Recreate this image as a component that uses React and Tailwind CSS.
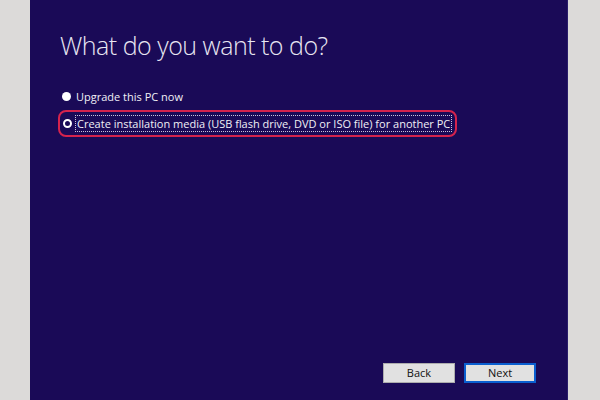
import React, { useState } from "react";

const options = [
  { id: "upgrade", label: "Upgrade this PC now" },
  {
    id: "media",
    label: "Create installation media (USB flash drive, DVD or ISO file) for another PC",
  },
];

const Radio = ({ checked }) => (
  <span
    className={`w-[9px] h-[9px] rounded-full shrink-0 ${
      checked ? "bg-[#1a0a57] border-[2.5px] border-white" : "bg-white"
    }`}
  />
);

export default function App() {
  const [choice, setChoice] = useState("media");

  return (
    <div
      className="w-[600px] h-[400px] flex bg-[#dcdad9] overflow-hidden"
      style={{ fontFamily: '"Open Sans", "Liberation Sans", sans-serif' }}
    >
      {/* Setup panel */}
      <div className="ml-[30px] w-[538px] h-full bg-[#1a0a57] border-r border-[#2a1d6a] flex flex-col pl-[30px] pr-[30px]">
        <h1 className="mt-[27px] text-[25px] font-light text-[#e8e6f2] tracking-[-0.5px] leading-[36px]">
          What do you want to do?
        </h1>

        <div className="mt-[25px] flex flex-col gap-[6px]">
          {options.map((opt) => {
            const active = choice === opt.id;
            return (
              <button
                key={opt.id}
                onClick={() => setChoice(opt.id)}
                className={`flex items-center gap-[4px] text-left self-start ${
                  active
                    ? "-ml-[2px] h-[27px] pl-[3px] pr-[4px] border-2 border-[#d5234d] rounded-[8px]"
                    : "h-[16px] pl-[2px]"
                }`}
              >
                <Radio checked={active} />
                <span
                  className={`text-[11px] text-[#f1f0f6] leading-[15px] px-[1px] ${
                    active ? "outline outline-1 outline-dotted outline-[#c9c6dc]" : ""
                  }`}
                >
                  {opt.label}
                </span>
              </button>
            );
          })}
        </div>

        <div className="mt-auto mb-[17px] flex justify-end gap-[9px] pr-[1px]">
          <button className="w-[72px] h-[20px] bg-[#e1e1e1] border border-[#adadad] text-[11px] text-[#111]">
            Back
          </button>
          <button className="w-[72px] h-[20px] bg-[#e1e1e1] border-2 border-[#0a5fd0] text-[11px] text-[#111]">
            Next
          </button>
        </div>
      </div>
    </div>
  );
}
